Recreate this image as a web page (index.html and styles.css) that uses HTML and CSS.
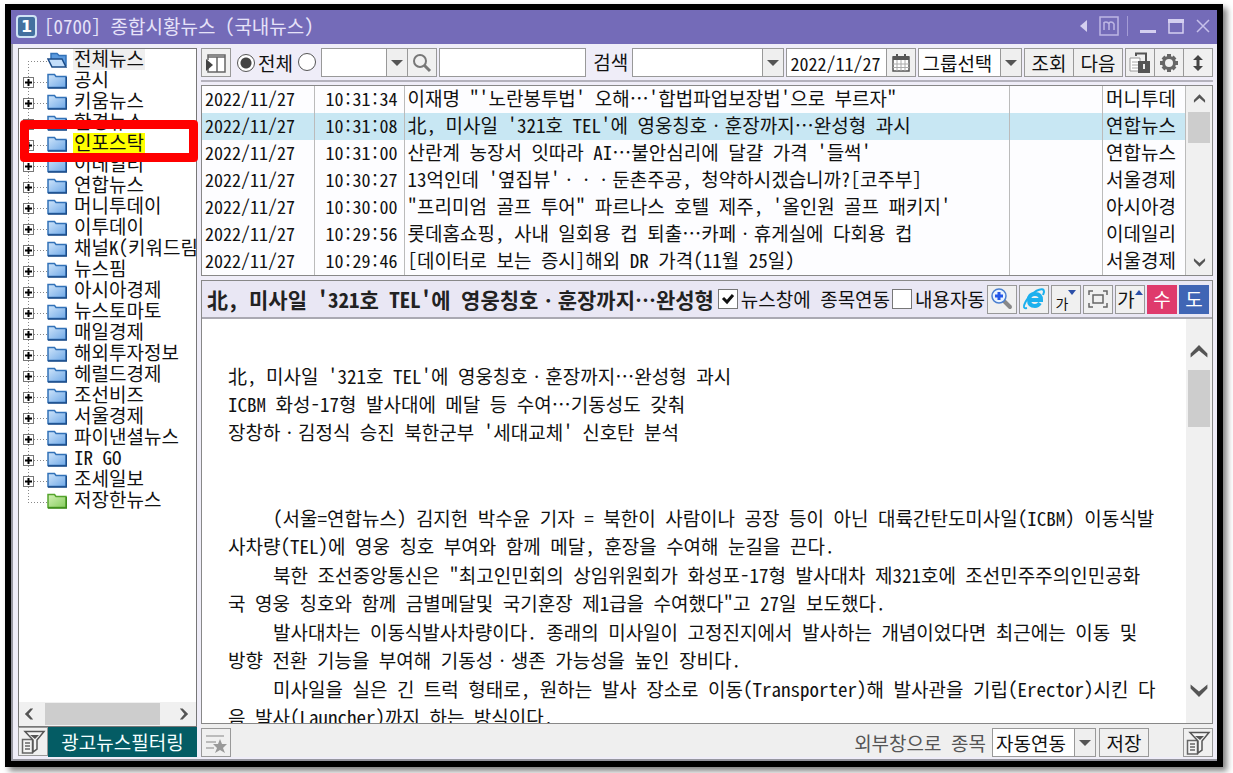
FILE: index.html
```html
<!DOCTYPE html>
<html lang="ko">
<head>
    <meta charset="UTF-8">
    <meta name="viewport" content="width=device-width, initial-scale=1.0">
    <title>[0700] 종합시황뉴스 (국내뉴스)</title>
    <link rel="stylesheet" href="styles.css">
</head>
<body>
    <!-- Shared icons -->
    <svg class="symbols" aria-hidden="true">
        <linearGradient id="blueFill" x1="0" y1="0" x2="1" y2="1">
            <stop offset="0" stop-color="#cfe5fb"/>
            <stop offset="1" stop-color="#6fa8e6"/>
        </linearGradient>
        <linearGradient id="greenFill" x1="0" y1="0" x2="1" y2="1">
            <stop offset="0" stop-color="#d3f2b6"/>
            <stop offset="1" stop-color="#86cc5e"/>
        </linearGradient>
        <symbol id="folder" viewBox="0 0 20 16">
            <path d="M1 14.500V1.500H7.500L9 3.500H19V14.500Z" fill="url(#blueFill)" stroke="#3272b8" stroke-width="1.500"/>
            <path d="M1 15H19.500V4" fill="none" stroke="#1c4c88" stroke-width="1.500"/>
        </symbol>
        <symbol id="folder-green" viewBox="0 0 20 16">
            <path d="M1 14.500V1.500H7.500L9 3.500H19V14.500Z" fill="url(#greenFill)" stroke="#55a42c" stroke-width="1.500"/>
            <path d="M1 15H19.500V4" fill="none" stroke="#3c8a1a" stroke-width="1.500"/>
        </symbol>
        <symbol id="folder-open" viewBox="0 0 20 16">
            <path d="M4 8V1.500H10L12 3.500H19V14" fill="#5b9ade" stroke="#3272b8" stroke-width="1.500"/>
            <path d="M1 7H15L19 15H5Z" fill="#c3defa" stroke="#1c4c88" stroke-width="1.500"/>
        </symbol>
        <symbol id="plus" viewBox="0 0 11 11">
            <rect x=".5" y=".5" width="10" height="10" fill="#fff" stroke="#777"/>
            <path d="M2 5.500H9M5.500 2V9" stroke="#000" stroke-width="2"/>
        </symbol>
        <symbol id="filter" viewBox="0 0 26 26">
            <path d="M2.500 10.500H12.500V24H2.500Z" fill="#f4f4f4" stroke="#666" stroke-width="1.500"/>
            <path d="M5 14H10M5 17H10M5 20H10" stroke="#666" stroke-width="1.500"/>
            <path d="M5 2.500H24L17 11V20L13 23V11Z" fill="#f4f4f4" stroke="#555" stroke-width="1.500"/>
            <path d="M10 6H19L15 10Z" fill="#555"/>
        </symbol>
        <symbol id="up" viewBox="0 0 14 10">
            <path d="M1 9V6L7 0L13 6V9L7 4Z" fill="#555"/>
        </symbol>
    </svg>

    <div class="window">
        <header class="titlebar">
            <span class="number">1</span>
            <h1>[0700] 종합시황뉴스 (국내뉴스)</h1>
            <div class="window-buttons">
                <button aria-label="이전"><svg width="8" height="12" viewBox="0 0 8 12"><path d="M8 0V12L1 6Z" fill="#d4cff0"/></svg></button>
                <button aria-label="모니터"><svg width="20" height="20" viewBox="0 0 20 20" fill="none" stroke="#bdb6e4" stroke-width="1.500"><rect x="1" y="1" width="18" height="18"/><path d="M5 14V6M5 7.500Q5 6 7 6T10 8V14M10 8Q10 6 12 6T15 8V14"/></svg></button>
                <span class="split"></span>
                <button aria-label="최소화"><svg width="16" height="16" viewBox="0 0 16 16"><path d="M0 12H16V15H0Z" fill="#d4cff0"/></svg></button>
                <button aria-label="최대화"><svg width="16" height="16" viewBox="0 0 16 16"><path d="M1 2H15V15H1Z" fill="none" stroke="#d4cff0" stroke-width="1.500"/><path d="M0 1H16V5H0Z" fill="#d4cff0"/></svg></button>
                <button aria-label="닫기"><svg width="14" height="14" viewBox="0 0 14 14"><path d="M1 1L13 13M13 1L1 13" stroke="#c6c0ea" stroke-width="1.500"/></svg></button>
            </div>
        </header>

        <div class="content">
            <!-- News source tree -->
            <nav class="sidebar">
                <div class="tree-box">
                    <ul class="tree">
                        <li><svg class="folder"><use href="#folder-open"/></svg><span class="selected">전체뉴스</span></li>
                        <li><button aria-label="펼치기"><svg><use href="#plus"/></svg></button><svg class="folder"><use href="#folder"/></svg><span>공시</span></li>
                        <li><button aria-label="펼치기"><svg><use href="#plus"/></svg></button><svg class="folder"><use href="#folder"/></svg><span>키움뉴스</span></li>
                        <li><button aria-label="펼치기"><svg><use href="#plus"/></svg></button><svg class="folder"><use href="#folder"/></svg><span>한경뉴스</span></li>
                        <li class="marked"><button aria-label="펼치기"><svg><use href="#plus"/></svg></button><svg class="folder"><use href="#folder"/></svg><span>인포스탁</span></li>
                        <li><button aria-label="펼치기"><svg><use href="#plus"/></svg></button><svg class="folder"><use href="#folder"/></svg><span>이데일리</span></li>
                        <li><button aria-label="펼치기"><svg><use href="#plus"/></svg></button><svg class="folder"><use href="#folder"/></svg><span>연합뉴스</span></li>
                        <li><button aria-label="펼치기"><svg><use href="#plus"/></svg></button><svg class="folder"><use href="#folder"/></svg><span>머니투데이</span></li>
                        <li><button aria-label="펼치기"><svg><use href="#plus"/></svg></button><svg class="folder"><use href="#folder"/></svg><span>이투데이</span></li>
                        <li><button aria-label="펼치기"><svg><use href="#plus"/></svg></button><svg class="folder"><use href="#folder"/></svg><span>채널K(키워드림</span></li>
                        <li><button aria-label="펼치기"><svg><use href="#plus"/></svg></button><svg class="folder"><use href="#folder"/></svg><span>뉴스핌</span></li>
                        <li><button aria-label="펼치기"><svg><use href="#plus"/></svg></button><svg class="folder"><use href="#folder"/></svg><span>아시아경제</span></li>
                        <li><button aria-label="펼치기"><svg><use href="#plus"/></svg></button><svg class="folder"><use href="#folder"/></svg><span>뉴스토마토</span></li>
                        <li><button aria-label="펼치기"><svg><use href="#plus"/></svg></button><svg class="folder"><use href="#folder"/></svg><span>매일경제</span></li>
                        <li><button aria-label="펼치기"><svg><use href="#plus"/></svg></button><svg class="folder"><use href="#folder"/></svg><span>해외투자정보</span></li>
                        <li><button aria-label="펼치기"><svg><use href="#plus"/></svg></button><svg class="folder"><use href="#folder"/></svg><span>헤럴드경제</span></li>
                        <li><button aria-label="펼치기"><svg><use href="#plus"/></svg></button><svg class="folder"><use href="#folder"/></svg><span>조선비즈</span></li>
                        <li><button aria-label="펼치기"><svg><use href="#plus"/></svg></button><svg class="folder"><use href="#folder"/></svg><span>서울경제</span></li>
                        <li><button aria-label="펼치기"><svg><use href="#plus"/></svg></button><svg class="folder"><use href="#folder"/></svg><span>파이낸셜뉴스</span></li>
                        <li><button aria-label="펼치기"><svg><use href="#plus"/></svg></button><svg class="folder"><use href="#folder"/></svg><span>IR GO</span></li>
                        <li><button aria-label="펼치기"><svg><use href="#plus"/></svg></button><svg class="folder"><use href="#folder"/></svg><span>조세일보</span></li>
                        <li><svg class="folder"><use href="#folder-green"/></svg><span>저장한뉴스</span></li>
                    </ul>
                    <div class="scroll-x">
                        <svg class="left"><use href="#up"/></svg>
                        <span class="thumb"></span>
                        <svg class="right"><use href="#up"/></svg>
                    </div>
                </div>
                <div class="filter-bar">
                    <button class="tool" aria-label="필터"><svg width="26" height="26"><use href="#filter"/></svg></button>
                    <button class="ad-filter">광고뉴스필터링</button>
                </div>
            </nav>

            <main class="main">
                <!-- Search toolbar -->
                <form class="toolbar">
                    <button type="button" class="tool" aria-label="목록 접기"><svg width="22" height="22" viewBox="0 0 22 22"><path d="M3 8V3H20V20H3V16" fill="#fff" stroke="#666" stroke-width="1.500"/><path d="M3 5H20M12 5V20" stroke="#666" stroke-width="1.500"/><path d="M1 7L8 13L1 19Z" fill="#444"/></svg></button>
                    <label class="radio"><input type="radio" name="scope" checked>전체</label>
                    <input class="code-radio" type="radio" name="scope" aria-label="종목">
                    <div class="group code">
                        <select aria-label="종목코드"><option></option></select>
                        <button type="button" class="tool" aria-label="찾기"><svg width="20" height="20" viewBox="0 0 20 20" fill="none" stroke="#777"><circle cx="8" cy="8" r="6" stroke-width="2"/><path d="M12.500 12.500L18 18" stroke-width="3"/></svg></button>
                    </div>
                    <input class="code-name" type="text" aria-label="종목명">
                    <label class="search-label" for="keyword">검색</label>
                    <select id="keyword" class="keyword"><option></option></select>
                    <div class="group">
                        <input class="date" type="text" value="2022/11/27" aria-label="날짜">
                        <button type="button" class="tool" aria-label="달력"><svg width="18" height="18" viewBox="0 0 18 18"><path d="M1 3H17V17H1Z" fill="#fff" stroke="#555" stroke-width="1.500"/><path d="M1 2H17V6H1ZM4 0H6V4H4ZM12 0H14V4H12Z" fill="#555"/><path d="M1 10H17M1 13.500H17M5 6V17M9 6V17M13 6V17" stroke="#aaa"/></svg></button>
                    </div>
                    <select class="group-select" aria-label="그룹"><option>그룹선택</option></select>
                    <div class="group">
                        <button type="button" class="text-button">조회</button>
                        <button type="button" class="text-button">다음</button>
                    </div>
                    <div class="group">
                        <button type="button" class="tool" aria-label="잠금"><svg width="22" height="22" viewBox="0 0 22 22"><path d="M1 6H11V19H1Z" fill="#fff" stroke="#999"/><path d="M3 10H9M3 13H9M3 16H9" stroke="#aaa"/><path d="M7 4V1.500H17V10" fill="none" stroke="#555" stroke-width="2"/><path d="M9 9H21V21H9Z" fill="#555"/><path d="M14 12H16V17H14Z" fill="#eee"/></svg></button>
                        <button type="button" class="tool" aria-label="설정"><svg width="20" height="20" viewBox="0 0 20 20" fill="none" stroke="#666"><circle cx="10" cy="10" r="5.500" stroke-width="3"/><path d="M10 1V4M10 16V19M1 10H4M16 10H19M4 4L6 6M14 14L16 16M16 4L14 6M6 14L4 16" stroke-width="4"/></svg></button>
                        <button type="button" class="tool" aria-label="높이 조절"><svg width="12" height="18" viewBox="0 0 12 18"><path d="M6 1L11 6H7.500V12H11L6 17L1 12H4.500V6H1Z" fill="#444"/></svg></button>
                    </div>
                </form>

                <!-- Headline list -->
                <section class="list">
                    <table>
                        <colgroup><col class="c-date"><col class="c-time"><col><col class="c-code"><col class="c-source"></colgroup>
                        <tbody>
                            <tr><td>2022/11/27</td><td>10:31:34</td><td>이재명 "'노란봉투법' 오해…'합법파업보장법'으로 부르자"</td><td></td><td>머니투데</td></tr>
                            <tr class="current"><td>2022/11/27</td><td>10:31:08</td><td>北, 미사일 '321호 TEL'에 영웅칭호ㆍ훈장까지…완성형 과시</td><td></td><td>연합뉴스</td></tr>
                            <tr><td>2022/11/27</td><td>10:31:00</td><td>산란계 농장서 잇따라 AI…불안심리에 달걀 가격 '들썩'</td><td></td><td>연합뉴스</td></tr>
                            <tr><td>2022/11/27</td><td>10:30:27</td><td>13억인데 '옆집뷰'ㆍㆍㆍ둔촌주공, 청약하시겠습니까?[코주부]</td><td></td><td>서울경제</td></tr>
                            <tr><td>2022/11/27</td><td>10:30:00</td><td>"프리미엄 골프 투어" 파르나스 호텔 제주, '올인원 골프 패키지'</td><td></td><td>아시아경</td></tr>
                            <tr><td>2022/11/27</td><td>10:29:56</td><td>롯데홈쇼핑, 사내 일회용 컵 퇴출…카페ㆍ휴게실에 다회용 컵</td><td></td><td>이데일리</td></tr>
                            <tr><td>2022/11/27</td><td>10:29:46</td><td>[데이터로 보는 증시]해외 DR 가격(11월 25일)</td><td></td><td>서울경제</td></tr>
                        </tbody>
                    </table>
                    <div class="scroll-y">
                        <svg><use href="#up"/></svg>
                        <span class="thumb"></span>
                        <svg class="down"><use href="#up"/></svg>
                    </div>
                </section>

                <!-- Article -->
                <article class="article">
                    <header class="article-head">
                        <h2>北, 미사일 '321호 TEL'에 영웅칭호ㆍ훈장까지…완성형</h2>
                        <label><input type="checkbox" checked>뉴스창에 종목연동</label>
                        <label><input type="checkbox">내용자동</label>
                        <div class="article-tools">
                            <button class="tool" aria-label="확대"><svg width="24" height="24" viewBox="0 0 24 24"><path d="M14 14L20 20" stroke="#888" stroke-width="4" stroke-linecap="round"/><circle cx="9" cy="9" r="7" fill="#eaf4ff" stroke="#4a7fd0" stroke-width="1.500"/><path d="M9 5V13M5 9H13" stroke="#2457e8" stroke-width="3"/></svg></button>
                            <button class="tool" aria-label="브라우저로 열기"><svg width="24" height="24" viewBox="0 0 24 24" fill="none"><path d="M18 16Q16 19 13 19Q7 19 7 13Q7 7 13 7Q19 7 19 13H8" stroke="#1cb0ee" stroke-width="4"/><path d="M5 21Q0 22 3 16Q6 9 14 4Q22 0 22 5L21 8" stroke="#1cb0ee" stroke-width="2"/></svg></button>
                            <button class="tool font-down" aria-label="글자 작게">가<svg width="8" height="5" viewBox="0 0 8 5"><path d="M0 0H8L4 5Z" fill="#2b4fa8"/></svg></button>
                            <button class="tool" aria-label="전체 화면"><svg width="20" height="18" viewBox="0 0 20 18" fill="none" stroke="#666" stroke-width="1.500"><rect x="5" y="5" width="10" height="8"/><path d="M1 5V1H5M15 1H19V5M19 13V17H15M5 17H1V13"/></svg></button>
                            <button class="tool font-up" aria-label="글자 크게">가<svg width="8" height="5" viewBox="0 0 8 5"><path d="M0 5H8L4 0Z" fill="#2b4fa8"/></svg></button>
                            <button class="tool buy">수</button>
                            <button class="tool sell">도</button>
                        </div>
                    </header>
                    <div class="article-view">
                        <div class="article-text">
                            <div class="lead">
                                北, 미사일 '321호 TEL'에 영웅칭호ㆍ훈장까지…완성형 과시<br>
                                ICBM 화성-17형 발사대에 메달 등 수여…기동성도 갖춰<br>
                                장창하ㆍ김정식 승진 북한군부 '세대교체' 신호탄 분석
                            </div>
                            <p>(서울=연합뉴스) 김지헌 박수윤 기자 = 북한이 사람이나 공장 등이 아닌 대륙간탄도미사일(ICBM) 이동식발<br>사차량(TEL)에 영웅 칭호 부여와 함께 메달, 훈장을 수여해 눈길을 끈다.</p>
                            <p>북한 조선중앙통신은 "최고인민회의 상임위원회가 화성포-17형 발사대차 제321호에 조선민주주의인민공화<br>국 영웅 칭호와 함께 금별메달및 국기훈장 제1급을 수여했다"고 27일 보도했다.</p>
                            <p>발사대차는 이동식발사차량이다. 종래의 미사일이 고정진지에서 발사하는 개념이었다면 최근에는 이동 및<br>방향 전환 기능을 부여해 기동성ㆍ생존 가능성을 높인 장비다.</p>
                            <p>미사일을 실은 긴 트럭 형태로, 원하는 발사 장소로 이동(Transporter)해 발사관을 기립(Erector)시킨 다<br>음 발사(Launcher)까지 하는 방식이다.</p>
                        </div>
                        <div class="scroll-y large">
                            <svg><use href="#up"/></svg>
                            <span class="thumb"></span>
                            <svg class="down"><use href="#up"/></svg>
                        </div>
                    </div>
                </article>

                <footer class="footer">
                    <button class="tool" aria-label="즐겨찾기"><svg width="24" height="24" viewBox="0 0 24 24"><path d="M2 5H20M2 11H12M2 17H10" stroke="#bbb" stroke-width="2"/><path d="M16 8L18 13H23L19 17L21 22L16 19L11 22L13 17L9 13H14Z" fill="#999"/></svg></button>
                    <label for="link">외부창으로 종목</label>
                    <select id="link"><option>자동연동</option></select>
                    <button class="text-button">저장</button>
                    <button class="tool last" aria-label="필터"><svg width="26" height="26"><use href="#filter"/></svg></button>
                </footer>
            </main>
        </div>
    </div>
</body>
</html>
```
FILE: styles.css
```css
* {
    box-sizing: border-box;
}
body {
    margin: 0;
    padding: 4px 10px 6px 5px;
    height: 100vh;
    background: #fff;
    color: #111;
}
body, button, input, select {
    font-family: "Noto Sans Mono CJK KR", "Noto Sans CJK KR", sans-serif;
    font-size: 19px;
    line-height: 20px;
}
button {
    padding: 0;
    cursor: pointer;
}
label {
    white-space: nowrap;
}
h1, h2, p, ul {
    margin: 0;
    padding: 0;
}
.symbols {
    position: absolute;
    width: 0;
    height: 0;
}
.window {
    height: 100%;
    display: flex;
    flex-direction: column;
    border: 6px solid #000;
    background: #efedf8;
    box-shadow: 4px 4px 6px rgba(0, 0, 0, 0.5);
}

/* Title bar */
.titlebar {
    height: 34px;
    flex: none;
    display: flex;
    align-items: center;
    gap: 7px;
    padding: 0 7px 2px 5px;
    background: #746bb8;
    color: #e6e2f8;
}
.titlebar h1 {
    flex: 1;
    font-size: 19px;
    font-weight: normal;
}
.number {
    width: 21px;
    height: 23px;
    border: 2px solid #cfe3f5;
    border-radius: 4px;
    background: #43709f;
    color: #fff;
    font: bold 16px/19px "DejaVu Sans", sans-serif;
    text-align: center;
}
.window-buttons {
    display: flex;
    align-items: center;
    gap: 12px;
}
.window-buttons button {
    display: flex;
    border: 0;
    background: none;
}
.split {
    width: 1px;
    height: 20px;
    margin-left: -4px;
    background: #a49cd6;
}

/* Panels */
.content {
    flex: 1;
    min-height: 0;
    display: flex;
    gap: 4px;
    padding: 4px 4px 2px 5px;
    border: 2px solid #96969f;
    border-width: 0 0 2px 2px;
}
.sidebar {
    width: 179px;
    flex: none;
    display: flex;
    flex-direction: column;
}
.tree-box {
    flex: 1;
    min-height: 0;
    display: flex;
    flex-direction: column;
    border: 1px solid #777;
    background: #fff;
}
.tree {
    flex: 1;
    list-style: none;
}
.tree li {
    position: relative;
    height: 21px;
    display: flex;
    align-items: center;
    padding-left: 28px;
    white-space: nowrap;
    background:
        repeating-linear-gradient(to bottom, #888 0 1px, transparent 1px 3px) 9px 0 / 1px 100% no-repeat,
        repeating-linear-gradient(to right, #888 0 1px, transparent 1px 3px) 9px 12px / 19px 1px no-repeat;
}
.tree li:first-child {
    background-position: 9px 12px, 9px 12px;
}
.tree li:last-child {
    background-size: 1px 12px, 19px 1px;
}
.tree button {
    position: absolute;
    left: 4px;
    top: 7px;
    width: 11px;
    height: 11px;
    display: flex;
    border: 0;
}
.tree button svg {
    width: 11px;
    height: 11px;
}
.folder {
    flex: none;
    width: 20px;
    height: 16px;
    margin-right: 6px;
}
.tree span {
    line-height: 17px;
    padding: 0 1px 4px;
}
.tree .selected {
    background: #efefef;
}
.marked span {
    background: #ff0;
}
.marked::after {
    content: "";
    position: absolute;
    z-index: 1;
    inset: -13px -2px -8px 1px;
    border: 9px solid #f00;
    border-radius: 4px;
}
.filter-bar {
    height: 30px;
    display: flex;
}
.ad-filter {
    flex: 1;
    border: 0;
    background: #045c64;
    color: #f4ffff;
}
.main {
    flex: 1;
    min-width: 0;
    display: flex;
    flex-direction: column;
}

/* Controls */
select, input[type="text"], .text-button, .tool {
    height: 29px;
    border: 1px solid #999;
    border-radius: 0;
    background-color: #fff;
    color: #111;
}
select {
    appearance: none;
    padding: 0 22px 0 3px;
    background: #fff url("data:image/svg+xml,%3Csvg xmlns='http://www.w3.org/2000/svg' width='21' height='27'%3E%3Cpath fill='%23efefef' d='M0 0H21V27H0z'/%3E%3Cpath fill='%23999' d='M0 0H1V27H0z'/%3E%3Cpath fill='%23555' d='M5 11H17L11 17z'/%3E%3C/svg%3E") right center no-repeat;
}
input[type="text"] {
    min-width: 0;
    padding: 0 3px;
}
.tool {
    width: 30px;
    flex: none;
    display: flex;
    align-items: center;
    justify-content: center;
    background: #f0f0f0;
}
.text-button {
    width: 50px;
    flex: none;
    background: #f0f0f0;
}
.group {
    display: flex;
}
.group > * + * {
    margin-left: -1px;
}
input[type="radio"] {
    appearance: none;
    flex: none;
    width: 18px;
    height: 18px;
    margin: 0;
    border: 1px solid #555;
    border-radius: 50%;
    background: #fff;
}
input[type="radio"]:checked {
    background: radial-gradient(#444 0 5px, #fff 6px);
}
.toolbar {
    height: 34px;
    flex: none;
    display: flex;
    gap: 2px;
    border-bottom: 2px solid #b4b2bd;
}
.radio {
    display: flex;
    align-items: center;
    gap: 3px;
    height: 29px;
    margin-left: 4px;
}
.toolbar .code-radio {
    align-self: center;
    margin: 0 3px 4px 3px;
}
.code select {
    width: 87px;
}
.code-name {
    flex: 1 1 148px;
}
.keyword {
    flex: 1 1 153px;
}
.search-label {
    padding: 4px 2px 0 5px;
}
.toolbar .date {
    width: 101px;
    font-size: 18px;
}
.group-select {
    width: 104px;
}

/* Headline list */
.list {
    flex: none;
    display: flex;
    margin-top: 3px;
    border: 1px solid #888;
    background: #fdfdff;
}
table {
    flex: 1;
    width: 100%;
    border-collapse: collapse;
    table-layout: fixed;
}
tr {
    height: 27px;
}
td {
    padding: 0 3px 3px;
    border-right: 1px solid #bbb;
    white-space: nowrap;
}
td:nth-child(1), td:nth-child(2) {
    font-size: 18px;
}
td:nth-child(2) {
    padding-right: 6px;
    text-align: right;
}
.current {
    background: #c8e7f3;
}
.c-date {
    width: 112px;
}
.c-time {
    width: 90px;
}
.c-code {
    width: 93px;
}
.c-source {
    width: 83px;
}

/* Scroll bars */
.scroll-y {
    width: 26px;
    flex: none;
    display: flex;
    flex-direction: column;
    align-items: center;
    padding: 8px 0;
    background: #f0f0f0;
}
.scroll-y svg, .scroll-x svg {
    width: 13px;
    height: 10px;
}
.scroll-y .thumb {
    width: 22px;
    height: 31px;
    margin-top: 8px;
    background: #cdcdcd;
}
.down {
    margin-top: auto;
    transform: rotate(180deg);
}
.scroll-y.large {
    padding: 26px 0;
}
.scroll-y.large svg {
    width: 20px;
    height: 14px;
}
.scroll-y.large .thumb {
    height: 57px;
    margin-top: 11px;
}
.scroll-x {
    height: 24px;
    display: flex;
    align-items: center;
    justify-content: space-between;
    padding: 0 6px 0 4px;
    background: #f0f0f0;
}
.scroll-x .thumb {
    width: 115px;
    height: 22px;
    margin-right: 8px;
    background: #cdcdcd;
}
.left {
    transform: rotate(-90deg);
}
.right {
    transform: rotate(90deg);
}

/* Article */
.article {
    flex: 1;
    min-height: 0;
    display: flex;
    flex-direction: column;
    margin-top: 4px;
    border: 1px solid #888;
}
.article-head {
    height: 38px;
    flex: none;
    display: flex;
    align-items: center;
    gap: 2px;
    padding: 0 3px 0 5px;
    border-bottom: 2px solid #aaa9b2;
    background: #e9e7f4;
}
.article-head h2 {
    flex: 1;
    min-width: 0;
    white-space: nowrap;
    font-size: 21px;
    line-height: 28px;
    color: #222;
}
.article-head label {
    display: flex;
    align-items: center;
    gap: 3px;
}
.article-head input {
    appearance: none;
    width: 20px;
    height: 20px;
    margin: 0;
    border: 1px solid #777;
    background: #fff;
}
.article-head input:checked {
    background: #fff url("data:image/svg+xml,%3Csvg xmlns='http://www.w3.org/2000/svg' width='18' height='18'%3E%3Cpath fill='none' stroke='%23111' stroke-width='3' d='M4 8L8 12L14 5'/%3E%3C/svg%3E") center no-repeat;
}
.article-tools {
    display: flex;
    gap: 2px;
}
.font-down {
    align-items: flex-end;
    font-size: 14px;
}
.font-down svg, .font-up svg {
    align-self: flex-start;
    margin-top: 4px;
}
.tool.buy {
    border-color: #df3a6c;
    background: #df3a6c;
    color: #fff;
}
.tool.sell {
    border-color: #4065b5;
    background: #4065b5;
    color: #fff;
}
.article-view {
    flex: 1;
    min-height: 0;
    display: flex;
    background: #fff;
}
.article-text {
    flex: 1;
    overflow: hidden;
    padding: 43px 12px 0 26px;
    line-height: 28px;
    word-break: break-all;
}
.lead {
    margin-bottom: 58px;
}
.article-text p {
    margin-bottom: 1px;
    text-indent: 45px;
}
.footer {
    height: 33px;
    flex: none;
    display: flex;
    align-items: flex-end;
    gap: 3px;
    background: #efefef;
}
.footer label {
    margin-left: auto;
    padding: 0 3px 4px 0;
    color: #555;
}
.footer select {
    width: 104px;
}
.footer .last {
    margin-left: 31px;
}
```
